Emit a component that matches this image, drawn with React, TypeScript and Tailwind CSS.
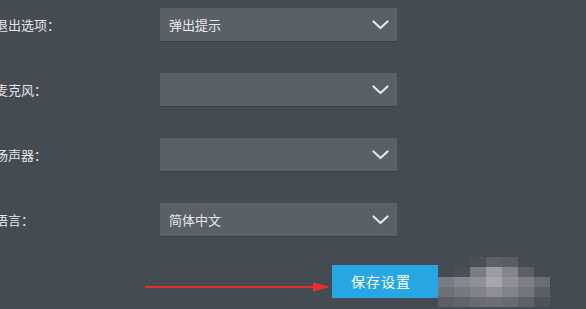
import React from "react";

const ROWS = [
  { label: "退出选项：", value: "弹出提示" },
  { label: "麦克风：", value: "" },
  { label: "扬声器：", value: "" },
  { label: "语言：", value: "简体中文" },
];

function Chevron() {
  return (
    <svg width="17" height="10" viewBox="0 0 17 10" fill="none" className="flex-shrink-0">
      <path d="M1.5 1.5L8.5 8L15.5 1.5" stroke="#e4e6ee" strokeWidth="2.2" strokeLinecap="round" strokeLinejoin="round" />
    </svg>
  );
}

function Mosaic() {
  // pixelated blur block beside the button
  const cells = [
    ["#444b53", "#444b53", "#4a5058", "#5d6068", "#5a5d65", "#444b53", "#444b53"],
    ["#444b53", "#4a5058", "#7a7b84", "#9d9ca5", "#85848e", "#5c5f67", "#444b53"],
    ["#7a7b84", "#868790", "#8f8f98", "#a6a5ae", "#908f99", "#7d7e87", "#6b6d75"],
    ["#6e7078", "#777881", "#818289", "#8f8e97", "#83838c", "#74767e", "#5c5f67"],
    ["#5b5e66", "#62646d", "#6a6b74", "#6d6e77", "#686a72", "#5f616a", "#4d535b"],
  ];
  return (
    <div className="flex flex-col">
      {cells.map((row, i) => (
        <div key={i} className="flex">
          {row.map((c, j) => (
            <div key={j} className="w-[16px] h-[10px]" style={{ backgroundColor: c }} />
          ))}
        </div>
      ))}
    </div>
  );
}

export default function App() {
  return (
    <div
      className="w-[586px] h-[309px] bg-[#444b53] overflow-hidden relative"
      style={{ fontFamily: '"Noto Sans CJK SC", "Noto Sans", sans-serif' }}
    >
      <div className="flex flex-col gap-[32px] pt-[8px]">
        {ROWS.map((r) => (
          <div key={r.label} className="flex items-center h-[33px]">
            <div className="w-[160px] ml-[-5px] text-[13px] text-[#e4e6ea] whitespace-nowrap">{r.label}</div>
            <div className="ml-[5px] w-[237px] h-[33px] bg-[#5a6068] flex items-center justify-between pl-[9px] pr-[8px] shadow-[0_1px_0_#3a4047]">
              <span className="text-[13px] text-[#e8e9ee]">{r.value}</span>
              <Chevron />
            </div>
          </div>
        ))}
      </div>

      <div className="flex items-center mt-[19px]">
        <svg width="186" height="12" viewBox="0 0 186 12" className="ml-[145px] mt-[12px]">
          <line x1="0" y1="6" x2="172" y2="6" stroke="#e0302a" strokeWidth="2.2" />
          <path d="M168 1.5L185 6L168 10.5Z" fill="#e8302a" />
        </svg>
        <button className="ml-[1px] w-[106px] h-[33px] bg-[#27a6e4] text-white text-[14px] tracking-[1px] flex items-center justify-center pr-[8px]">
          保存设置
        </button>
        <div className="mt-[2px]">
          <Mosaic />
        </div>
      </div>
    </div>
  );
}
